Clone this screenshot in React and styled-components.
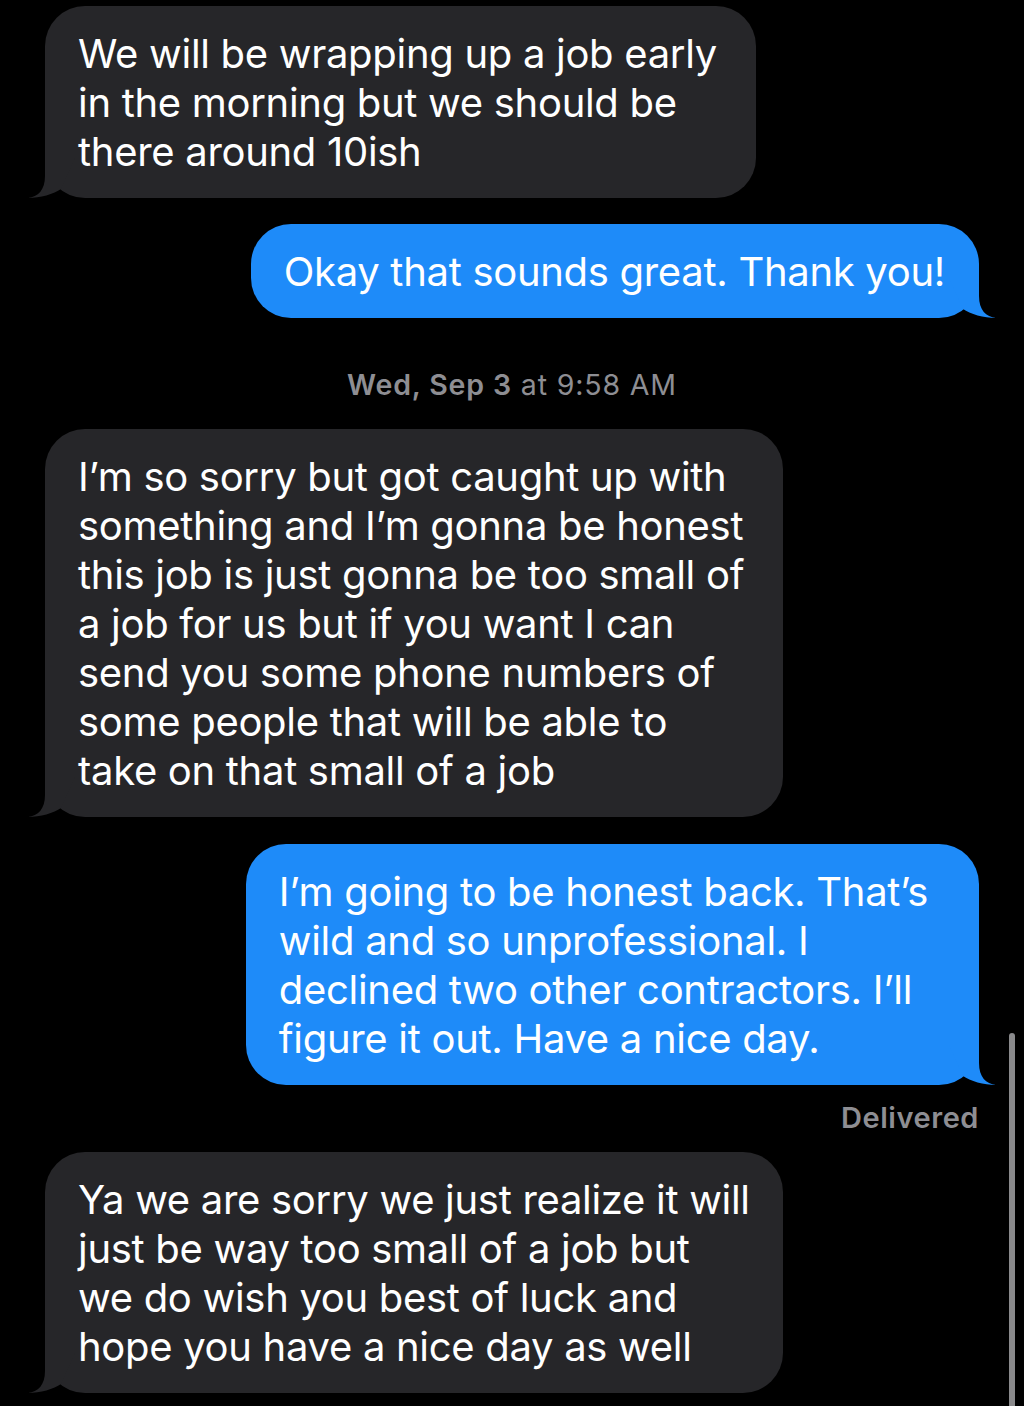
import React from "react";
import styled, { createGlobalStyle } from "styled-components";

const Global = createGlobalStyle`
  html, body { margin: 0; padding: 0; background: #000; }
  body { font-family: Inter, "Noto Sans", "Liberation Sans", sans-serif; -webkit-font-smoothing: antialiased; }
`;

const Screen = styled.div`
  position: relative;
  width: 1024px;
  height: 1406px;
  overflow: hidden;
  background: #000;
`;

const Thread = styled.div`
  display: flex;
  flex-direction: column;
  padding: 6px 45px 0 45px;
`;

const Row = styled.div`
  display: flex;
  justify-content: ${(p) => (p.$mine ? "flex-end" : "flex-start")};
  margin-top: ${(p) => p.$gap || 0}px;
`;

const Bubble = styled.div`
  position: relative;
  background: ${(p) => (p.$mine ? "#1e8bf9" : "#262629")};
  color: #fff;
  border-radius: 40px;
  padding: 23px ${(p) => p.$pr || 36}px 22px 33px;
  font-size: 40px;
  line-height: 49px;
  letter-spacing: -0.3px;
  white-space: nowrap;
`;

const Line = styled.span`
  display: block;
`;

const Tail = styled.svg`
  position: absolute;
  bottom: 0;
  width: 47px;
  height: 40px;
  ${(p) => (p.$mine ? "right: -17px;" : "left: -17px; transform: scaleX(-1);")}
`;

const Stamp = styled.div`
  margin: 50px 0 27px;
  text-align: center;
  color: #8e8e93;
  font-size: 28.5px;
  line-height: 34px;
  letter-spacing: 0.85px;
  b { font-weight: 600; }
`;

const Status = styled.div`
  margin: 16px 0 17px;
  text-align: right;
  color: #8e8e93;
  font-size: 29px;
  font-weight: 600;
  line-height: 34px;
  letter-spacing: 0.55px;
`;

const ScrollThumb = styled.div`
  position: absolute;
  right: 9px;
  top: 1033px;
  width: 6px;
  height: 400px;
  border-radius: 3px;
  background: #8a8a8c;
`;

function Message({ mine, lines, gap, pr }) {
  const fill = mine ? "#1e8bf9" : "#262629";
  return (
    <Row $mine={mine} $gap={gap}>
      <Bubble $mine={mine} $pr={pr}>
        {lines.map((l, i) => (
          <Line key={i}>{l}</Line>
        ))}
        <Tail $mine={mine} viewBox="-30 -40 47 40">
          <path
            d="M -30 -40 L 0 -40 L 0 -22 C 0 -8 7 -1 17 0 C 5 0 -9 -4 -16 -9 Z"
            fill={fill}
          />
        </Tail>
      </Bubble>
    </Row>
  );
}

export default function App() {
  return (
    <Screen>
      <Global />
      <Thread>
        <Message
          lines={[
            "We will be wrapping up a job early",
            "in the morning but we should be",
            "there around 10ish",
          ]}
          pr={39}
        />
        <Message mine gap={26} lines={["Okay that sounds great. Thank you!"]} pr={34} />
        <Stamp>
          <b>Wed, Sep 3</b> at 9:58 AM
        </Stamp>
        <Message
          lines={[
            "I\u2019m so sorry but got caught up with",
            "something and I\u2019m gonna be honest",
            "this job is just gonna be too small of",
            "a job for us but if you want I can",
            "send you some phone numbers of",
            "some people that will be able to",
            "take on that small of a job",
          ]}
          pr={39}
        />
        <Message
          mine
          gap={27}
          lines={[
            "I\u2019m going to be honest back. That\u2019s",
            "wild and so unprofessional. I",
            "declined two other contractors. I\u2019ll",
            "figure it out. Have a nice day.",
          ]}
          pr={51}
        />
        <Status>Delivered</Status>
        <Message
          lines={[
            "Ya we are sorry we just realize it will",
            "just be way too small of a job but",
            "we do wish you best of luck and",
            "hope you have a nice day as well",
          ]}
          pr={33}
        />
      </Thread>
      <ScrollThumb />
    </Screen>
  );
}
